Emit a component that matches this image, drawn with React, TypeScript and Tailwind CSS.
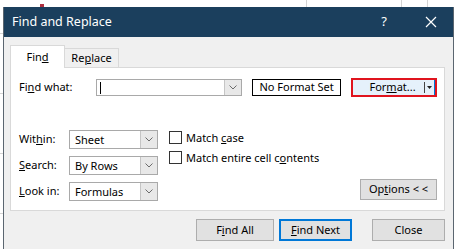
import React from 'react'

const font = { fontFamily: '"Segoe UI", "Noto Sans", "Open Sans", sans-serif' }

// Small gray chevron used by the combo boxes
function Chevron() {
  return (
    <svg width="8" height="5" viewBox="0 0 8 5" className="block">
      <polyline points="0.5,0.5 4,4 7.5,0.5" fill="none" stroke="#6b6b6b" strokeWidth="1" />
    </svg>
  )
}

function Combo({ value, width }: { value: string; width: string }) {
  return (
    <div className={`flex h-[19px] ${width} border border-[#a9a9a9] bg-white`}>
      <div className="flex-1 pl-[5px] text-[11px] leading-[17px] text-black">{value}</div>
      <div className="flex w-[17px] items-center justify-center border-l border-[#c5c5c5] bg-[#e8e8e8]">
        <Chevron />
      </div>
    </div>
  )
}

function Check({ children }: { children: React.ReactNode }) {
  return (
    <div className="flex h-[13px] items-center">
      <div className="h-[13px] w-[13px] border border-[#333] bg-white" />
      <span className="ml-[4px] text-[11px] leading-[13px] text-black">{children}</span>
    </div>
  )
}

function Button({ children, width, primary }: { children: React.ReactNode; width: string; primary?: boolean }) {
  return (
    <div
      className={`flex h-[22px] ${width} items-center justify-center bg-[#e1e1e1] text-[11px] text-black ${
        primary ? 'border-2 border-[#0078d7]' : 'border border-[#adadad]'
      }`}
    >
      {children}
    </div>
  )
}

export default function App() {
  return (
    <div className="relative h-[249px] w-[456px] overflow-hidden bg-white" style={font}>
      {/* spreadsheet behind the dialog */}
      <div className="absolute left-[306px] top-0 h-[8px] w-px bg-[#d4d4d4]" />
      <div className="absolute left-[401px] top-0 h-[8px] w-px bg-[#d4d4d4]" />
      <div className="absolute left-[427px] top-0 h-[8px] w-px bg-[#d4d4d4]" />
      <div className="absolute left-0 top-[33px] h-px w-[3px] bg-[#d4d4d4]" />
      <div className="absolute left-0 top-[93px] h-px w-[3px] bg-[#d4d4d4]" />
      <div className="absolute left-0 top-[153px] h-px w-[3px] bg-[#d4d4d4]" />
      <div className="absolute left-0 top-[213px] h-px w-[3px] bg-[#d4d4d4]" />
      <div className="absolute left-[40px] top-[4px] h-[3px] w-[4px] bg-[#b03040]" />

      {/* dialog window */}
      <div className="absolute left-[3px] top-[7px] flex h-[260px] w-[451px] flex-col border-x border-[#5b6670] bg-[#f0f0f0]">
        <div className="flex h-[30px] items-center bg-[#1b3f5d] pl-[8px] text-white">
          <span className="text-[12.5px]">Find and Replace</span>
          <span className="ml-auto text-[13px]">?</span>
          <svg width="12" height="12" viewBox="0 0 12 12" className="ml-[38px] mr-[16px]">
            <path d="M1 1 L11 11 M11 1 L1 11" stroke="white" strokeWidth="1.2" />
          </svg>
        </div>

        <div className="flex flex-col pl-[6px] pr-[8px]">
          {/* tabs */}
          <div className="mt-[8px] flex h-[22px] items-end">
            <div className="relative z-10 -mb-px flex h-[23px] w-[55px] items-center justify-center border border-b-0 border-[#d9d9d9] bg-white text-[11px]">
              Fin<u>d</u>
            </div>
            <div className="flex h-[19px] w-[54px] items-center justify-center border border-b-0 border-l-0 border-[#d9d9d9] bg-[#f0f0f0] text-[11px]">
              Re<u>p</u>lace
            </div>
          </div>

          {/* tab panel */}
          <div className="flex h-[144px] flex-col border border-[#d9d9d9] bg-white pl-[8px] pr-[7px]">
            <div className="mt-[10px] flex items-center">
              <span className="w-[78px] text-[11px]">
                Fi<u>n</u>d what:
              </span>
              <div className="flex h-[17px] w-[148px] border border-[#a9a9a9] bg-white">
                <div className="flex-1 pl-[3px] pt-[2px]">
                  <div className="h-[12px] w-px bg-black" />
                </div>
                <div className="flex w-[17px] items-center justify-center border-l border-[#c5c5c5] bg-[#e8e8e8]">
                  <Chevron />
                </div>
              </div>
              <div className="ml-[10px] flex h-[17px] w-[90px] items-center justify-center border border-black text-[11px]">
                No Format Set
              </div>
              <div className="ml-[10px] flex h-[19px] w-[87px] border-2 border-[#e0141e] bg-[#e5f1fb]">
                <div className="flex flex-1 items-center justify-center pl-[8px] text-[11px]">
                  For<u>m</u>at...
                </div>
                <div className="my-[2px] w-px bg-[#444]" />
                <div className="flex w-[9px] items-center justify-center">
                  <svg width="5" height="3" viewBox="0 0 5 3">
                    <path d="M0 0 H5 L2.5 3 Z" fill="#222" />
                  </svg>
                </div>
                <div className="w-px bg-[#0078d7]" />
              </div>
            </div>

            <div className="mt-[33px] flex">
              <div className="flex flex-col gap-[7px]">
                <div className="flex items-center">
                  <span className="w-[50px] text-[11px]">
                    Wit<u>h</u>in:
                  </span>
                  <Combo value="Sheet" width="w-[89px]" />
                </div>
                <div className="flex items-center">
                  <span className="w-[50px] text-[11px]">
                    <u>S</u>earch:
                  </span>
                  <Combo value="By Rows" width="w-[89px]" />
                </div>
                <div className="flex items-center">
                  <span className="w-[50px] text-[11px]">
                    <u>L</u>ook in:
                  </span>
                  <Combo value="Formulas" width="w-[89px]" />
                </div>
              </div>

              <div className="ml-[11px] mt-[1px] flex flex-col gap-[7px]">
                <Check>
                  Match <u>c</u>ase
                </Check>
                <Check>
                  Match entire cell c<u>o</u>ntents
                </Check>
              </div>

              <div className="ml-auto flex items-end">
                <div className="mb-[1px] flex h-[21px] w-[77px] items-center justify-center border border-[#adadad] bg-[#e1e1e1] text-[11px]">
                  Op<u>t</u>ions &lt; &lt;
                </div>
              </div>
            </div>
          </div>

          {/* bottom buttons */}
          <div className="mt-[8px] flex items-center pl-[186px]">
            <Button width="w-[79px]">
              F<u>i</u>nd All
            </Button>
            <div className="ml-[5px]">
              <Button width="w-[73px]" primary>
                <u>F</u>ind Next
              </Button>
            </div>
            <div className="ml-[20px]">
              <Button width="w-[73px]">Close</Button>
            </div>
          </div>
        </div>
      </div>
    </div>
  )
}
